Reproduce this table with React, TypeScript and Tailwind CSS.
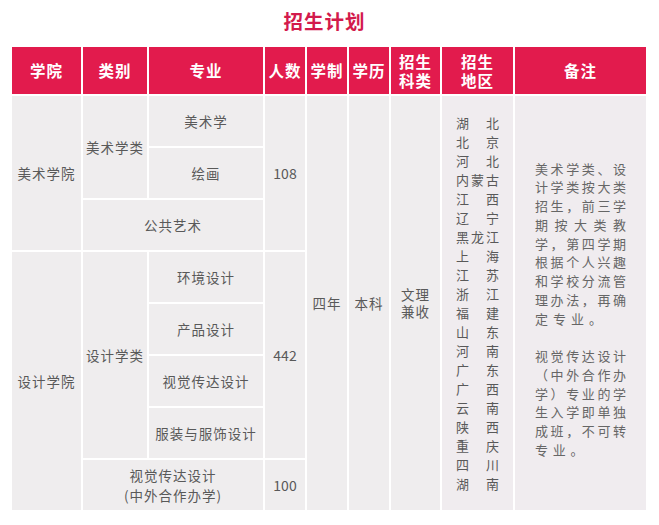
const regions = [
  "湖北", "北京", "河北", "内蒙古", "江西", "辽宁", "黑龙江", "上海", "江苏", "浙江",
  "福建", "山东", "河南", "广东", "广西", "云南", "陕西", "重庆", "四川", "湖南",
];

const notesA = ["美术学类、设", "计学类按大类", "招生，前三学", "期按大类教", "学，第四学期", "根据个人兴趣", "和学校分流管", "理办法，再确"];
const notesB = ["视觉传达设计", "（中外合作办", "学）专业的学", "生入学即单独", "成班，不可转"];

const head = "flex flex-col items-center justify-center text-center bg-[#e21b4d] text-white font-bold text-[15.5px] tracking-[1px] leading-[19px]";
const cell = "flex flex-col items-center justify-center text-center bg-[#efedee] text-[#595959] text-[13.5px] tracking-[1px]";

const JustLine = ({ text }: { text: string }) => (
  <div className="flex justify-between h-[18.75px] items-center">
    {text.split("").map((c, i) => (
      <span key={i}>{c}</span>
    ))}
  </div>
);

const App = () => {
  return (
    <div className="w-[659px] h-[525px] bg-white font-['Noto_Sans_CJK_SC',sans-serif]">
      {/* 标题 */}
      <div className="h-[42px] mb-[5px] flex items-center justify-center pr-[10px]">
        <h1 className="text-[19.5px] font-bold text-[#d31a4c] tracking-[1px]">招生计划</h1>
      </div>

      <div className="ml-[12px] w-[634px] grid grid-cols-[69px_64px_114px_40px_40px_40px_49px_71px_131px] grid-rows-[47px_repeat(8,50px)] gap-[2px]">
        {/* 表头 */}
        <div className={head}>学院</div>
        <div className={head}>类别</div>
        <div className={head}>专业</div>
        <div className={head}>人数</div>
        <div className={head}>学制</div>
        <div className={head}>学历</div>
        <div className={head}>
          <span className="h-[19px]">招生</span>
          <span className="h-[19px]">科类</span>
        </div>
        <div className={head}>
          <span className="h-[19px]">招生</span>
          <span className="h-[19px]">地区</span>
        </div>
        <div className={head}>备注</div>

        {/* 美术学院 */}
        <div className={`${cell} col-start-1 row-start-2 row-span-3`}>美术学院</div>
        <div className={`${cell} col-start-2 row-start-2 row-span-2`}>美术学类</div>
        <div className={`${cell} col-start-3 row-start-2`}>美术学</div>
        <div className={`${cell} col-start-3 row-start-3`}>绘画</div>
        <div className={`${cell} col-start-2 col-span-2 row-start-4`}>公共艺术</div>
        <div className={`${cell} col-start-4 row-start-2 row-span-3 text-[14px] tracking-normal`}>108</div>

        {/* 共用列 */}
        <div className={`${cell} col-start-5 row-start-2 row-span-8`}>四年</div>
        <div className={`${cell} col-start-6 row-start-2 row-span-8`}>本科</div>
        <div className={`${cell} col-start-7 row-start-2 row-span-8`}>
          <span className="h-[17px] leading-[17px]">文理</span>
          <span className="h-[17px] leading-[17px]">兼收</span>
        </div>

        <div className="col-start-8 row-start-2 row-span-8 bg-[#f0ecef] flex items-center justify-center text-[13px] text-[#595959]">
          <div className="w-[43px]">
            {regions.map((r) => (
              <div key={r} className="flex justify-between h-[19px] items-center">
                {r.split("").map((c, i) => (
                  <span key={i}>{c}</span>
                ))}
              </div>
            ))}
          </div>
        </div>

        <div className="col-start-9 row-start-2 row-span-8 bg-[#f0ecef] text-[13px] text-[#666]">
          <div className="ml-[20px] mt-[63px] w-[91px]">
            {notesA.map((l) => (
              <JustLine key={l} text={l} />
            ))}
            <div className="h-[18.75px] flex items-center tracking-[5px]">定专业。</div>
            <div className="h-[18.75px]" />
            {notesB.map((l) => (
              <JustLine key={l} text={l} />
            ))}
            <div className="h-[18.75px] flex items-center tracking-[4.7px]">专业。</div>
          </div>
        </div>

        {/* 设计学院 */}
        <div className={`${cell} col-start-1 row-start-5 row-span-5`}>设计学院</div>
        <div className={`${cell} col-start-2 row-start-5 row-span-4`}>设计学类</div>
        <div className={`${cell} col-start-3 row-start-5`}>环境设计</div>
        <div className={`${cell} col-start-3 row-start-6`}>产品设计</div>
        <div className={`${cell} col-start-3 row-start-7`}>视觉传达设计</div>
        <div className={`${cell} col-start-3 row-start-8`}>服装与服饰设计</div>
        <div className={`${cell} col-start-4 row-start-5 row-span-4 text-[14px] tracking-normal`}>442</div>
        <div className={`${cell} col-start-2 col-span-2 row-start-9`}>
          <span className="h-[20px] leading-[20px]">视觉传达设计</span>
          <span className="h-[20px] leading-[20px]">(中外合作办学)</span>
        </div>
        <div className={`${cell} col-start-4 row-start-9 text-[14px] tracking-normal`}>100</div>
      </div>
    </div>
  );
};

export default App;
